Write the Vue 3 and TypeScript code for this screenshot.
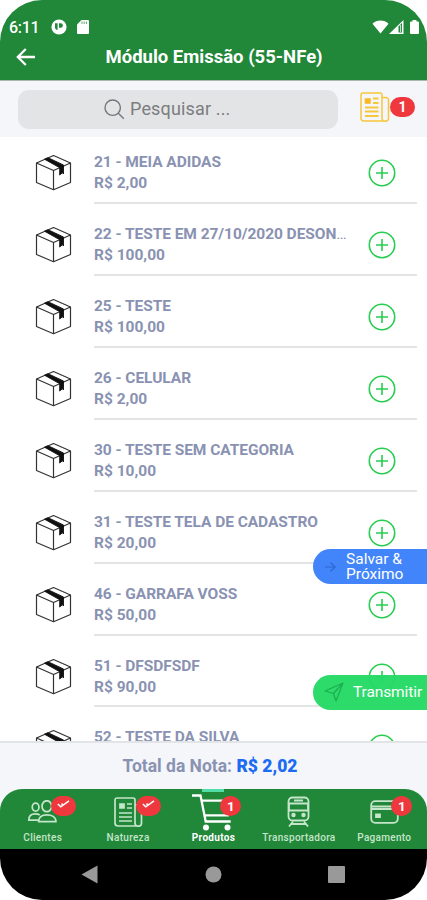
<script setup lang="ts">
interface Product {
  id: number
  name: string
  price: string
}

const products: Product[] = [
  { id: 21, name: 'MEIA ADIDAS', price: 'R$ 2,00' },
  { id: 22, name: 'TESTE EM 27/10/2020 DESONERADO', price: 'R$ 100,00' },
  { id: 25, name: 'TESTE', price: 'R$ 100,00' },
  { id: 26, name: 'CELULAR', price: 'R$ 2,00' },
  { id: 30, name: 'TESTE SEM CATEGORIA', price: 'R$ 10,00' },
  { id: 31, name: 'TESTE TELA DE CADASTRO', price: 'R$ 20,00' },
  { id: 46, name: 'GARRAFA VOSS', price: 'R$ 50,00' },
  { id: 51, name: 'DFSDFSDF', price: 'R$ 90,00' },
  { id: 52, name: 'TESTE DA SILVA', price: '' },
]

type TabIcon = 'people' | 'news' | 'cart' | 'train' | 'card'

interface Tab {
  label: string
  icon: TabIcon
  badge?: 'check' | '1'
  active?: boolean
}

const tabs: Tab[] = [
  { label: 'Clientes', icon: 'people', badge: 'check' },
  { label: 'Natureza', icon: 'news', badge: 'check' },
  { label: 'Produtos', icon: 'cart', badge: '1', active: true },
  { label: 'Transportadora', icon: 'train' },
  { label: 'Pagamento', icon: 'card', badge: '1' },
]
</script>

<template>
  <div class="phone">
    <header class="top">
      <div class="status">
        <span class="clock">6:11</span>
        <svg class="st-p" width="16" height="16" viewBox="0 0 16 16">
          <circle cx="8" cy="8" r="7.6" fill="#fff" />
          <path d="M4 4.300h2.600v6.500H5.200L4 9zM8 4.300h1.700a2.200 2.200 0 0 1 0 4.400H8z" fill="#218739" />
        </svg>
        <svg class="st-sd" width="12" height="14" viewBox="0 0 12 14">
          <path d="M4.500 0H11a1 1 0 0 1 1 1v12a1 1 0 0 1-1 1H1a1 1 0 0 1-1-1V4.500z" fill="#fff" />
          <path d="M5 1.500v2.500M7.200 1.500v2.500M9.400 1.500v2.500" stroke="#218739" stroke-width=".7" />
        </svg>
        <svg class="st-wifi" width="17" height="14" viewBox="0 0 18 14">
          <path d="M9 14 .5 3.600C5-.9 13-.9 17.500 3.600z" fill="#fff" />
        </svg>
        <svg class="st-cell" width="15" height="14" viewBox="0 0 15 14">
          <path d="M14.500 0v14H0z" fill="#fff" />
          <path d="M9.500 6.500 13 3v9.500H9.500z" fill="#218739" />
          <path d="M11.600 5v7" stroke="#fff" stroke-width=".8" />
        </svg>
        <svg class="st-bat" width="9" height="14" viewBox="0 0 9 14">
          <path d="M2.500 0h4v1.500H8a1 1 0 0 1 1 1V13a1 1 0 0 1-1 1H1a1 1 0 0 1-1-1V2.500a1 1 0 0 1 1-1h1.500z" fill="#fff" />
        </svg>
      </div>
      <div class="titlebar">
        <svg class="back" width="20" height="18" viewBox="0 0 20 18" fill="none" stroke="#fff" stroke-width="2.300">
          <path d="M9.800 1 1.800 9l8 8M2 9h17" />
        </svg>
        <h1>Módulo Emissão (55-NFe)</h1>
      </div>
    </header>

    <section class="searchbar">
      <div class="search">
        <svg width="21" height="21" viewBox="0 0 21 21" fill="none" stroke="#75777a" stroke-width="1.400">
          <circle cx="8.700" cy="8.700" r="7.700" />
          <path d="m14.300 14.300 5.500 5.500" />
        </svg>
        <span>Pesquisar ...</span>
      </div>
      <svg class="note" width="30" height="30" viewBox="0 0 30 30" fill="none" stroke="#f8c63d" stroke-width="1.500">
        <path d="M22 26V3a2 2 0 0 0-2-2H3a2 2 0 0 0-2 2v23a3 3 0 0 0 3 3h21.500M22 5.500h4a2.500 2.500 0 0 1 2.500 2.500v18a3 3 0 0 1-6.500 0" />
        <path d="M5.500 7h4.500v4H5.500z" fill="#f8b820" stroke="#f8b820" />
        <path d="M13 6.500h5.500M13 11h5.500M5 15.500h13.500M5 19.500h13.500M5 24h13.500" stroke-width="1.800" />
      </svg>
      <span class="pill">1</span>
    </section>

    <main class="list">
      <article v-for="p in products" :key="p.id" class="row">
        <svg class="box" width="37" height="37" viewBox="0 0 37 37" fill="none" stroke="#333" stroke-width="1.200" stroke-linejoin="round">
          <path d="M18.500 1.500 35.500 9v19.500l-17 7.300-17-7.300V9z" fill="#fff" />
          <path d="m1.500 9 17 7.500 17-7.500M18.500 16.500v19.300" />
          <path d="m9.500 5.200 3.500-1.500 15.500 7.300v9l-1.200-1.200-2.600 2.200v-7.300z" fill="#111" stroke="#111" stroke-width=".9" />
        </svg>
        <div class="body">
          <div class="text">
            <div class="name"><b>{{ p.id }} - {{ p.name }}</b></div>
            <div v-if="p.price" class="price">{{ p.price }}</div>
          </div>
          <svg class="add" width="28" height="28" viewBox="0 0 28 28" fill="none" stroke="#25ce4d" stroke-width="1.600">
            <circle cx="14" cy="14" r="12.700" />
            <path d="M14 8v12M8 14h12" />
          </svg>
        </div>
      </article>
    </main>

    <button class="fab save">
      <svg width="12" height="12" viewBox="0 0 12 12" fill="none" stroke="#2c67cd" stroke-width="1.200">
        <path d="M1 6h10M6.500 1.500 11 6l-4.500 4.500" />
      </svg>
      <span>Salvar &amp;<br />Próximo</span>
    </button>
    <button class="fab send">
      <svg width="20" height="20" viewBox="0 0 20 20" fill="none" stroke="#1bae51" stroke-width="1.200" stroke-linejoin="round">
        <path d="M19 1 1 9l8.500 2.500L12 19zM19 1 9.500 11.500" />
      </svg>
      <span>Transmitir</span>
    </button>

    <section class="total">Total da Nota: <b>R$ 2,02</b></section>

    <div class="navwrap">
      <nav class="tabs">
        <div v-for="t in tabs" :key="t.label" class="tab" :class="{ active: t.active }">
          <div class="icon">
            <svg v-if="t.icon === 'people'" width="31" height="23" viewBox="0 0 31 24" fill="none" stroke="#c5e6ca" stroke-width="1.800">
              <ellipse cx="20" cy="6.500" rx="5" ry="5.700" />
              <path d="M11.500 22.500c0-5 3.500-7 8.500-7s9.500 2 9.500 7zM11 21H1.200c0-4.500 2.500-6.500 6.800-6.500 2 0 3.500.4 4.600 1.200" />
              <ellipse cx="8.300" cy="7.500" rx="3.500" ry="4.200" />
            </svg>
            <svg v-else-if="t.icon === 'news'" width="29" height="30" viewBox="0 0 29 30" fill="none" stroke="#c5e6ca" stroke-width="1.700">
              <path d="M21 26V3a2 2 0 0 0-2-2H3a2 2 0 0 0-2 2v23a3 3 0 0 0 3 3h20.500M21 8h4.500a2 2 0 0 1 2 2v16a3 3 0 0 1-6.500 0" />
              <path d="M6 7h4v4H6z" fill="#c5e6ca" />
              <path d="M13 7h5M13 11h5M5 16h13M5 20h13M5 24h13" />
            </svg>
            <svg v-else-if="t.icon === 'cart'" width="42" height="39" viewBox="0 0 42 39" fill="none" stroke="#fff" stroke-width="2.300">
              <path d="M0 3.500h8.500l5.200 26h25M9.500 8.700h29l-2.700 14.600H12.500" />
              <circle cx="14" cy="35.400" r="3" fill="#fff" stroke="none" />
              <circle cx="35.500" cy="35.400" r="3" fill="#fff" stroke="none" />
            </svg>
            <svg v-else-if="t.icon === 'train'" width="23" height="31" viewBox="0 0 23 31" fill="none" stroke="#c5e6ca" stroke-width="1.800">
              <rect x="1.500" y="1.500" width="20" height="23" rx="4" />
              <path d="M7 4.500h9M2 7.500h19v7H2zM6 25.500l-4 5M17 25.500l4 5M4 28h15" />
              <circle cx="6.500" cy="19" r="1.300" fill="#c5e6ca" />
              <circle cx="16.500" cy="19" r="1.300" fill="#c5e6ca" />
            </svg>
            <svg v-else width="29" height="24" viewBox="0 0 29 24" fill="none" stroke="#c5e6ca" stroke-width="1.800">
              <rect x="1.200" y="1.200" width="26.600" height="21.600" rx="4" />
              <path d="M1.500 6.500h26M1.500 9h26" />
              <path d="M6 14.500h4v2.500H6z" fill="#c5e6ca" />
            </svg>
            <span v-if="t.badge" class="badge" :class="{ wide: t.badge === 'check' }">
              <svg v-if="t.badge === 'check'" width="13" height="8" viewBox="0 0 13 8" fill="none" stroke="#fff" stroke-width="1.600">
                <path d="m.8 4 3 2.800L12 .8M4.500 3.600l1.800 1.600" />
              </svg>
              <template v-else>{{ t.badge }}</template>
            </span>
          </div>
          <span class="label">{{ t.label }}</span>
        </div>
      </nav>
    </div>

    <footer class="android">
      <svg width="17" height="19" viewBox="0 0 17 19"><path d="M16.500.5v18L.5 9.500z" fill="#999" /></svg>
      <svg width="17" height="17" viewBox="0 0 17 17"><circle cx="8.500" cy="8.500" r="8" fill="#999" /></svg>
      <svg width="17" height="17" viewBox="0 0 17 17"><rect width="17" height="17" rx="1" fill="#999" /></svg>
    </footer>
  </div>
</template>

<style>
body {
  margin: 0;
  background: #fff;
}
</style>

<style scoped>
.phone {
  position: relative;
  display: flex;
  flex-direction: column;
  width: 427px;
  height: 900px;
  overflow: hidden;
  border-radius: 42px;
  background: #fff;
  font-family: Roboto, sans-serif;
}
.top {
  flex: none;
  height: 80px;
  background: #218739;
  color: #fff;
  border-bottom: 1px solid #a9b9b0;
}
.status {
  display: flex;
  align-items: center;
  box-sizing: border-box;
  height: 42px;
  padding: 12px 8px 0 9px;
}
.clock {
  width: 42px;
  font-size: 16px;
  font-weight: 500;
  letter-spacing: -0.3px;
}
.st-sd {
  margin-left: 10px;
}
.st-wifi {
  margin-left: auto;
}
.st-bat {
  margin-left: 6px;
}
.titlebar {
  display: flex;
  align-items: center;
  height: 30px;
  padding-left: 16px;
}
h1 {
  margin: 0 0 0 69.500px;
  font-size: 18.500px;
  font-weight: 700;
  white-space: nowrap;
}
.searchbar {
  display: flex;
  flex: none;
  align-items: center;
  box-sizing: border-box;
  height: 56px;
  padding: 0 12px 0 18px;
  background: #f4f6fa;
}
.search {
  display: flex;
  align-items: center;
  box-sizing: border-box;
  width: 320px;
  height: 39px;
  padding-left: 86px;
  border-radius: 11px;
  background: #e3e4e6;
  color: #7b7d80;
  font-size: 18px;
  letter-spacing: 0.15px;
}
.search span {
  margin-left: 5px;
  margin-top: -1px;
}
.note {
  margin: -4px 0 0 22px;
}
.pill {
  width: 25px;
  height: 20px;
  border-radius: 10px;
  background: #ee383d;
  color: #fff;
  font-size: 14px;
  font-weight: 700;
  line-height: 20px;
  text-align: center;
  margin-top: -4px;
}
.list {
  flex: none;
  height: 604px;
  overflow: hidden;
}
.row {
  display: flex;
  height: 71.930px;
  padding-left: 35px;
}
.row:first-child {
  height: 67px;
}
.row:first-child .body {
  padding-top: 14px;
}
.row:first-child .box {
  margin-top: 17px;
}
.box {
  flex: none;
  margin-top: 22px;
}
.body {
  display: flex;
  box-sizing: border-box;
  width: 323px;
  height: 100%;
  margin-left: 22px;
  padding-top: 19px;
  border-bottom: 2px solid #e3e4e6;
}
.text {
  flex: none;
  width: 256px;
  color: #8a92b2;
  font-size: 15.500px;
  font-weight: 700;
  line-height: 21px;
  letter-spacing: -0.050px;
  padding-top: 1px;
}
.name {
  overflow: hidden;
  font-weight: 400;
  white-space: nowrap;
  text-overflow: ellipsis;
}
.name b {
  font-weight: 700;
}
.price {
  letter-spacing: 0;
}
.add {
  flex: none;
  margin: 8px 0 0 18px;
}
.fab {
  position: absolute;
  right: 0;
  display: flex;
  align-items: center;
  box-sizing: border-box;
  width: 114px;
  height: 35px;
  padding: 0;
  border: 0;
  border-radius: 18px 0 0 18px;
  color: #fff;
  font-family: inherit;
  font-size: 15.500px;
  line-height: 15px;
  text-align: left;
  white-space: nowrap;
}
.save {
  top: 549px;
  padding-left: 11px;
  background: #4285fa;
}
.save span {
  margin-left: 10px;
}
.send {
  top: 674.500px;
  padding-left: 11px;
  background: rgba(36, 218, 101, 0.960);
}
.send span {
  margin-left: 9px;
  letter-spacing: -0.1px;
}
.total {
  flex: none;
  box-sizing: border-box;
  height: 48px;
  border-top: 2px solid #e2e4e8;
  background: #f4f6fa;
  color: #8a92b2;
  font-size: 17.500px;
  font-weight: 700;
  line-height: 46px;
  text-align: center;
  padding-right: 7px;
}
.total b {
  color: #1c6bf2;
}
.navwrap {
  flex: none;
  height: 60px;
  background: linear-gradient(#f4f6fa 50%, #000 50%);
}
.tabs {
  display: grid;
  grid-template-columns: repeat(5, 1fr);
  height: 60px;
  border-radius: 22px 22px 0 0;
  background: #218739;
  overflow: hidden;
}
.tab {
  display: flex;
  flex-direction: column;
  align-items: center;
  color: #c5e6ca;
}
.icon {
  position: relative;
  display: flex;
  align-items: center;
  justify-content: center;
  width: 42px;
  height: 42px;
  padding-top: 3px;
  box-sizing: border-box;
}
.label {
  font-size: 10px;
  font-weight: 500;
  line-height: 13px;
  letter-spacing: 0.300px;
}
.active .label {
  color: #fff;
  font-weight: 700;
}
.active {
  background: linear-gradient(#50dda8, #50dda8) center top / 22px 3px no-repeat;
}
.badge {
  position: absolute;
  top: 7px;
  left: 28px;
  display: flex;
  align-items: center;
  justify-content: center;
  width: 21px;
  height: 20px;
  border-radius: 10px;
  background: #ee383d;
  color: #fff;
  font-size: 13.500px;
  font-weight: 700;
}
.badge.wide {
  left: 29px;
  width: 25px;
}
.wide svg {
  margin-top: -4px;
}
.android {
  display: flex;
  flex: 1;
  align-items: center;
  justify-content: space-between;
  padding: 0 82px 1px 81px;
  background: #000;
}
</style>
